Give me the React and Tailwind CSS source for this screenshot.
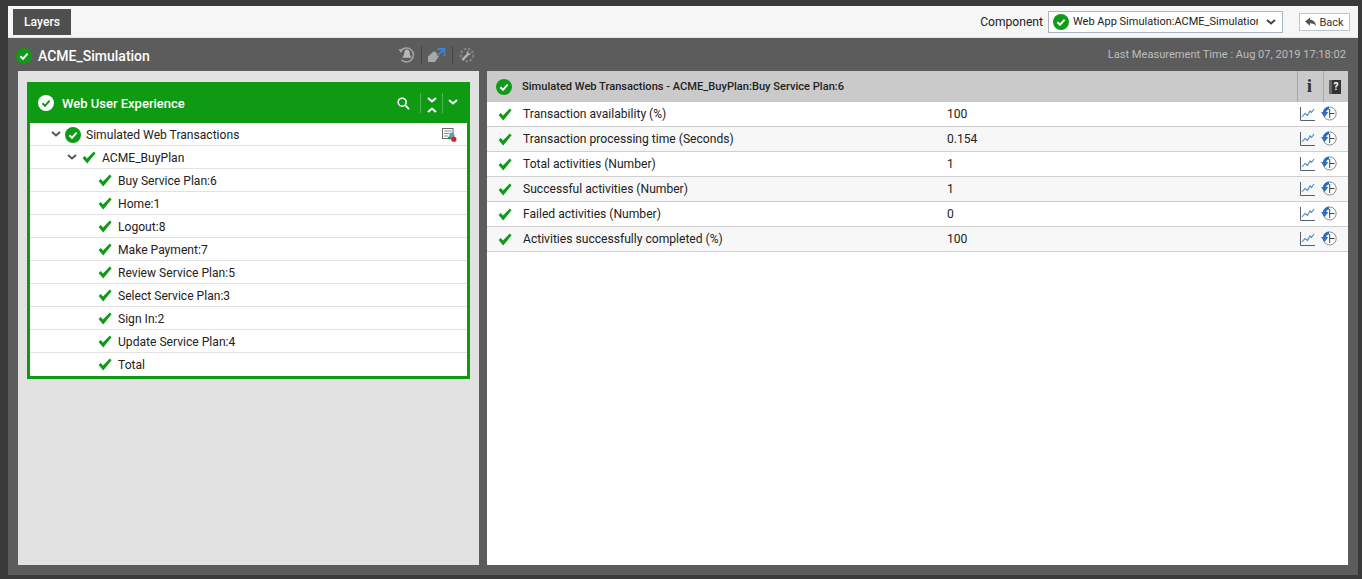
import React from 'react';

const treeItems = ['Buy Service Plan:6', 'Home:1', 'Logout:8', 'Make Payment:7', 'Review Service Plan:5', 'Select Service Plan:3', 'Sign In:2', 'Update Service Plan:4', 'Total'];

const measures = [
  ['Transaction availability (%)', '100'],
  ['Transaction processing time (Seconds)', '0.154'],
  ['Total activities (Number)', '1'],
  ['Successful activities (Number)', '1'],
  ['Failed activities (Number)', '0'],
  ['Activities successfully completed (%)', '100'],
];

function Tick({ className = '' }) {
  return (
    <svg viewBox="0 0 14 13" className={`w-[14px] h-[13px] shrink-0 ${className}`}>
      <path d="M0.6 7 L2.8 5 L5 7.4 L11.8 0.6 L13.6 2.2 L5.2 12.4 Z" fill="#119a18" />
    </svg>
  );
}

function Circle({ size = 16, bg = '#119a18', fg = '#fff' }) {
  return (
    <svg viewBox="0 0 16 16" width={size} height={size} className="shrink-0">
      <circle cx="8" cy="8" r="8" fill={bg} />
      <path d="M4.4 8.3 L7 10.8 L11.6 5.7" fill="none" stroke={fg} strokeWidth="2" />
    </svg>
  );
}

function Chev({ className = '', up = false, color = '#555', w = 2 }) {
  return (
    <svg viewBox="0 0 10 6" className={`w-[10px] h-[6px] ${className}`}>
      <path d={up ? 'M1 5 L5 1.5 L9 5' : 'M1 1 L5 4.5 L9 1'} fill="none" stroke={color} strokeWidth={w} />
    </svg>
  );
}

function GraphIcon() {
  return (
    <svg viewBox="0 0 15 15" className="w-[15px] h-[15px]">
      <path d="M0.5 1 V14.5 H15" fill="none" stroke="#56606e" strokeWidth="1" />
      <path d="M2 11 L5 7.5 L7.5 9.5 L10 5 L11.5 6.5 L14 3" fill="none" stroke="#4a86c8" strokeWidth="1.1" />
    </svg>
  );
}

function HistoryIcon() {
  return (
    <svg viewBox="0 0 16 15" className="w-[16px] h-[15px]">
      <circle cx="8.7" cy="7.5" r="6.5" fill="#fff" stroke="#8a8a8a" strokeWidth="1" />
      <path d="M8.7 3 V12 M8.7 7.5 H13.5" fill="none" stroke="#444" strokeWidth="1" />
      <path d="M8 0.6 C4.6 0.8 2.4 3 2 6 L0 6 L3.6 11 L7.4 6 L5.2 6 C5.5 4.6 6.6 3.8 8 3.6 Z" fill="#2f6fc0" />
    </svg>
  );
}

export default function App() {
  return (
    <div className="w-[1362px] h-[579px] overflow-hidden bg-[#3a3a3a] pt-[6px] pl-2 pr-1 pb-1 flex flex-col font-['Roboto',sans-serif] text-[12.1px] text-[#222]">
      {/* top bar */}
      <div className="h-[32px] bg-[#f6f6f6] border-b border-[#e4e4e4] flex items-center pl-[5px] pr-[8px] shrink-0">
        <div className="h-[26px] w-[58px] bg-[#4f4f4f] text-white font-medium flex items-center justify-center pt-[2px]">Layers</div>
        <div className="ml-auto flex items-center">
          <span className="mr-[5px] mt-[2px]">Component</span>
          <div className="w-[235px] h-[22px] bg-white border border-[#aab4c4] flex items-center pl-[4px]">
            <Circle size={16} />
            <span className="ml-[4px] mt-[2px] w-[185px] overflow-hidden whitespace-nowrap text-[11px]">Web App Simulation:ACME_Simulation</span>
            <Chev className="ml-[8px]" color="#444" />
          </div>
          <div className="ml-[16px] w-[51px] h-[18px] bg-white border border-[#bcc4d0] flex items-center justify-center gap-[3px] text-[#333] text-[11px]">
            <svg viewBox="0 0 12 10" className="w-[11px] h-[10px]">
              <path d="M0 4.5 L5.5 0 V2.6 C9 2.6 11.5 5 12 9.5 C10.5 7.2 8.5 6.4 5.5 6.4 V9 Z" fill="#555" />
            </svg>
            <span className="mt-[3px]">Back</span>
          </div>
        </div>
      </div>

      {/* main */}
      <div className="flex-1 min-h-0 bg-[#5c5c5c] pl-[10px] pr-[10px] pb-[10px] flex flex-col">
        <div className="h-[33px] shrink-0 flex items-center text-white">
          <span className="-ml-[2px] mt-[2px]"><Circle size={16} /></span>
          <span className="ml-[6px] mt-[3px] text-[14px] font-medium">ACME_Simulation</span>
          <div className="ml-[248px] mt-[1px] flex items-center">
            <svg viewBox="0 0 17 16" className="w-[17px] h-[16px]">
              <path d="M3 3.5 A7 7 0 1 1 3.4 12.8" fill="none" stroke="#a8a8a8" strokeWidth="1.4" />
              <path d="M0.5 2 L5 2.5 L3 6 Z" fill="#a8a8a8" />
              <path d="M9 2.5 C6.6 2.5 6.3 5 6.1 7.5 L4.4 10.8 H13.6 L11.9 7.5 C11.7 5 11.4 2.5 9 2.5 Z" fill="#b8b8b8" />
            </svg>
            <span className="w-px h-[18px] bg-[#454545] mx-[6px]" />
            <svg viewBox="0 0 18 15" className="w-[18px] h-[15px]">
              <path d="M0 8.5 L5.5 3.5 H7 L11 8 L7 14 H0 Z" fill="#a8a8a8" />
              <path d="M9 7.5 L15.5 2 M9.5 1 H16.5 V8" fill="none" stroke="#3c84d0" strokeWidth="1.8" />
            </svg>
            <span className="w-px h-[18px] bg-[#454545] mx-[6px]" />
            <svg viewBox="0 0 16 16" className="w-[16px] h-[16px]">
              <circle cx="8" cy="8" r="6.2" fill="none" stroke="#808080" strokeWidth="2.2" strokeDasharray="2.6 1.6" />
              <path d="M3.6 12.6 L8.6 7.6" fill="none" stroke="#b4b4b4" strokeWidth="2.4" />
              <path d="M7.6 6.8 C7.2 5 8.6 3.8 10.2 4 L9 5.6 L10.6 7 L12 5.6 C12.2 7.4 10.6 8.6 9 8.2 Z" fill="#b4b4b4" />
            </svg>
          </div>
          <span className="ml-auto mt-[2px] pr-[2px] text-[#bcbcbc] text-[11.1px]">Last Measurement Time : Aug 07, 2019 17:18:02</span>
        </div>

        <div className="flex-1 min-h-0 flex gap-[8px]">
          {/* left column */}
          <div className="w-[461px] shrink-0 bg-[#e2e2e2] pt-[11px] pl-[9px] pr-[9px]">
            <div className="border-[3px] border-[#0f9a14] bg-white">
              <div className="-mx-[3px] -mt-[3px] h-[41px] bg-[#0f9a14] flex items-center pl-[11px] text-white">
                <Circle size={16} bg="#fff" fg="#0f9a14" />
                <span className="ml-[8px] mt-[3px] text-[13px] font-medium">Web User Experience</span>
                <div className="ml-auto flex items-center h-full">
                  <svg viewBox="0 0 14 14" className="w-[13px] h-[13px] mr-[10px] mt-[1px]">
                    <circle cx="5.6" cy="5.6" r="4.3" fill="none" stroke="#fff" strokeWidth="1.7" />
                    <path d="M8.8 8.8 L13 13" stroke="#fff" strokeWidth="2" />
                  </svg>
                  <span className="w-px h-[20px] bg-[#4db451]" />
                  <div className="w-[21px] flex flex-col items-center gap-[4px] pt-[5px]">
                    <Chev color="#fff" />
                    <Chev up color="#fff" />
                  </div>
                  <span className="w-px h-[20px] bg-[#4db451]" />
                  <div className="w-[27px] flex justify-center pr-[7px] -mt-[2px]"><Chev color="#fff" /></div>
                </div>
              </div>
              <div className="h-[23px] border-b border-[#e2e2e2] flex items-center pl-[21px] pr-[10px] pt-[1px]">
                <Chev className="-mt-[2px]" />
                <span className="ml-[4px]"><Circle size={16} /></span>
                <span className="ml-[5px] mt-[2px]">Simulated Web Transactions</span>
                <svg viewBox="0 0 15 15" className="ml-auto w-[15px] h-[15px]">
                  <rect x="0.5" y="1.5" width="10.5" height="10" fill="#fff" stroke="#666" />
                  <path d="M2 4 H9.5 M2 6.5 H7 M2 9 H6" stroke="#888" />
                  <circle cx="7.6" cy="10.8" r="1.6" fill="#3c8a3c" />
                  <circle cx="9.8" cy="8" r="2.6" fill="#4da3c4" />
                  <circle cx="11.8" cy="12.2" r="2.6" fill="#d8202c" />
                </svg>
              </div>
              <div className="h-[23px] border-b border-[#e2e2e2] flex items-center pl-[37px] pt-[1px]">
                <Chev className="-mt-[2px]" />
                <Tick className="ml-[5px]" />
                <span className="ml-[6px] mt-[2px]">ACME_BuyPlan</span>
              </div>
              {treeItems.map((item, i) => (
                <div key={item} className={`h-[23px] flex items-center pl-[68px] ${i < treeItems.length - 1 ? 'border-b border-[#e2e2e2] pt-[1px]' : ''}`}>
                  <Tick />
                  <span className="ml-[6px] mt-[2px]">{item}</span>
                </div>
              ))}
            </div>
          </div>

          {/* right column */}
          <div className="flex-1 bg-white">
            <div className="h-[31px] bg-[#cacaca] flex items-center pl-[9px] text-[11.1px] font-medium">
              <Circle size={16} />
              <span className="ml-[10px] mt-[2px]">Simulated Web Transactions - ACME_BuyPlan:Buy Service Plan:6</span>
              <div className="ml-auto flex h-full">
                <div className="w-[26px] border-l border-[#a8a8a8] flex items-center justify-center pr-[2px] font-['Liberation_Serif',serif] font-bold text-[19px] text-[#333]">i</div>
                <div className="w-[25px] border-l border-[#a8a8a8] flex items-center justify-center pr-[3px]">
                  <div className="w-[12px] h-[14px] bg-[#333] border-l-[3px] border-[#666] text-white font-bold text-[10px] flex items-center justify-center">?</div>
                </div>
              </div>
            </div>
            {measures.map(([name, value], i) => (
              <div key={name} className={`h-[25px] border-b border-[#cfcfcf] flex items-center pl-[11px] pr-[11px] ${i % 2 === 1 ? 'bg-[#f7f7f7]' : 'bg-white'}`}>
                <Tick />
                <span className="ml-[11px] w-[424px]">{name}</span>
                <span>{value}</span>
                <div className="ml-auto -mt-[2px] flex items-center gap-[6px]">
                  <GraphIcon />
                  <HistoryIcon />
                </div>
              </div>
            ))}
          </div>
        </div>
      </div>
    </div>
  );
}
